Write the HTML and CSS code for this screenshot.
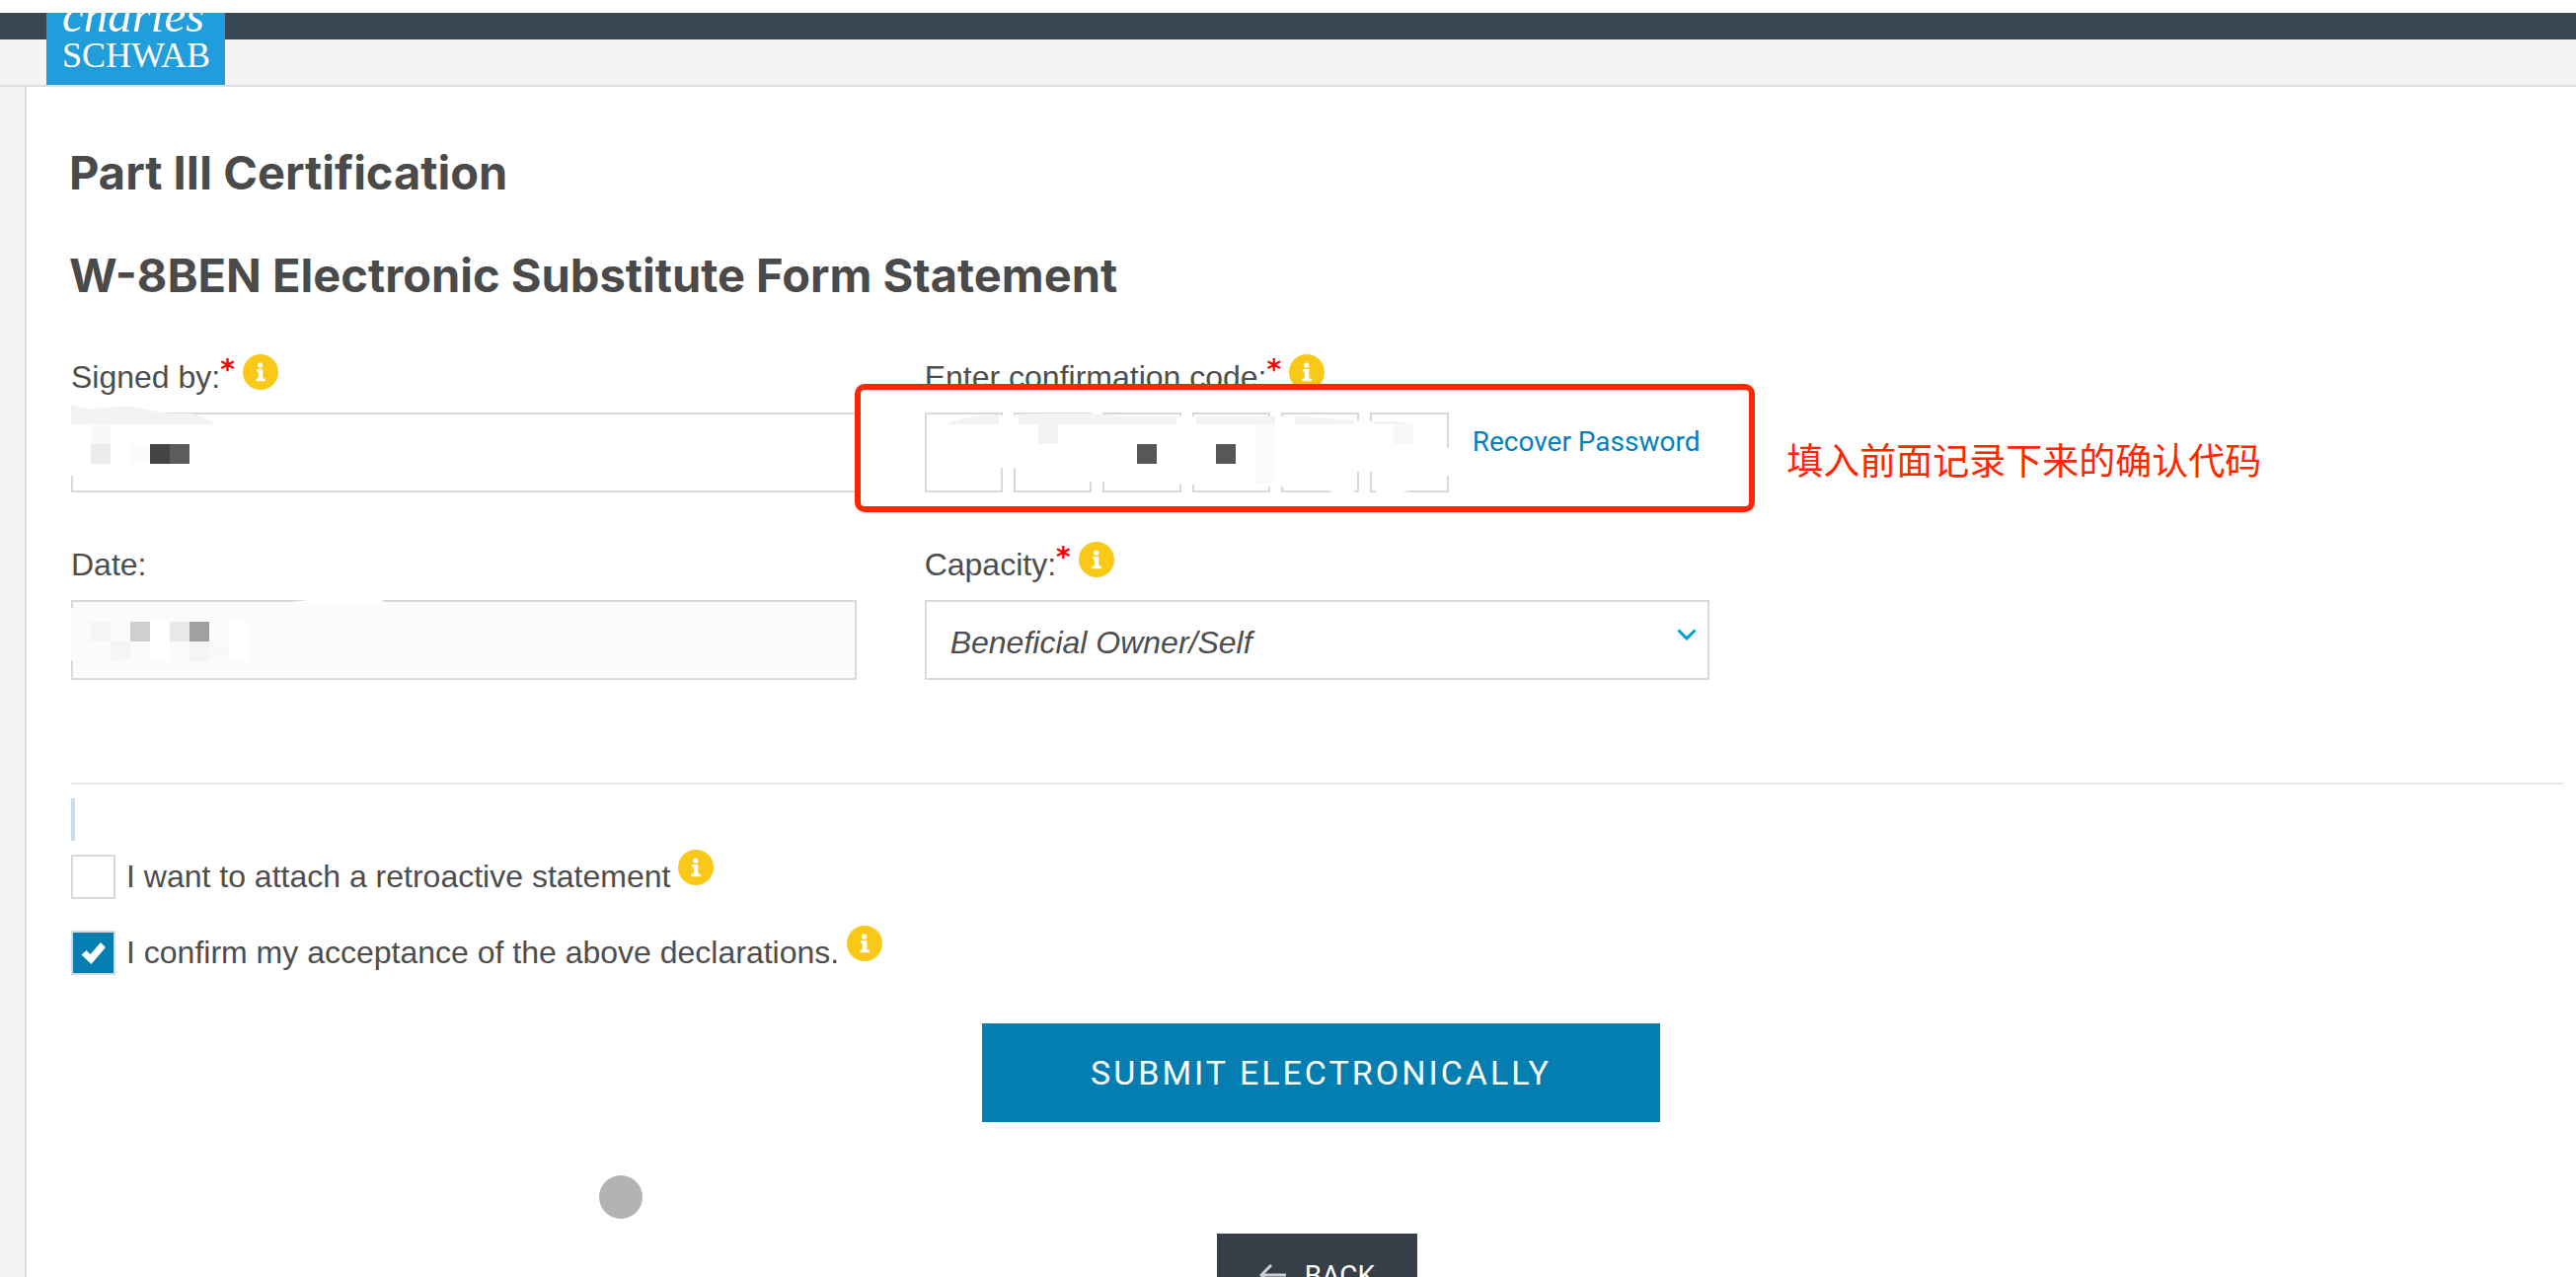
FILE: index.html
```html
<!DOCTYPE html>
<html lang="en">
<head>
<meta charset="utf-8">
<title>W-8BEN Certification</title>
<link rel="stylesheet" href="styles.css">
</head>
<body>
<svg class="defs" aria-hidden="true">
  <symbol id="info" viewBox="0 0 36 36">
    <circle cx="18" cy="18" r="18" fill="#fac917"/>
    <circle cx="17.7" cy="11.2" r="2.6" fill="#fff"/>
    <path d="M14 15h6.4v9.6h2.4v2.6h-9.4v-2.6h2.4v-7H14z" fill="#fff"/>
  </symbol>
</svg>

<header class="site-header">
  <div class="topbar"></div>
  <a class="logo" href="#" aria-label="Charles Schwab">
    <span class="logo-first">charles</span>
    <span class="logo-last">SCHWAB</span>
  </a>
</header>

<main class="panel">
  <h1 class="title">Part III Certification</h1>
  <h2 class="title">W-8BEN Electronic Substitute Form Statement</h2>

  <form class="form">
    <div class="fields">
      <div class="field">
        <div class="label-row">
          <label for="signed">Signed by:</label><span class="required">*</span>
          <button type="button" class="info" aria-label="About signed by"><svg><use href="#info"/></svg></button>
        </div>
        <div class="control">
          <input class="box" id="signed" type="text">
          <svg class="mosaic mosaic-signed" viewBox="0 0 160 80" aria-hidden="true">
            <path fill="#fff" d="M0 10H100V40H0zM0 20H4V72H0z"/>
            <path fill="#f3f3f3" d="M0 0C8 2 12 4 22 4C36 3 50 1 62 2C76 4 86 8 102 9L121 9C132 11 140 15 147 20H0z"/>
            <path fill="#f9f9f9" d="M20 20h20v20H20z"/>
            <path fill="#ebebeb" d="M20 40h20v20H20z"/>
            <path fill="#fbfbfb" d="M60 40h20v20H60z"/>
            <path fill="#444" d="M80 40h20v20H80z"/>
            <path fill="#5c5c5c" d="M100 40h20v20h-20z"/>
          </svg>
        </div>
      </div>

      <div class="field">
        <div class="label-row">
          <label for="code1">Enter confirmation code:</label><span class="required">*</span>
          <button type="button" class="info" aria-label="About the confirmation code"><svg><use href="#info"/></svg></button>
        </div>
        <div class="control code-row">
          <div class="codes">
            <input class="box" id="code1" type="text" maxlength="1">
            <input class="box" type="text" maxlength="1" aria-label="Code character 2">
            <input class="box" type="text" maxlength="1" aria-label="Code character 3">
            <input class="box" type="text" maxlength="1" aria-label="Code character 4">
            <input class="box" type="text" maxlength="1" aria-label="Code character 5">
            <input class="box" type="text" maxlength="1" aria-label="Code character 6">
          </div>
          <a class="recover" href="#">Recover Password</a>
          <svg class="mosaic mosaic-code" viewBox="0 0 540 90" aria-hidden="true">
            <path fill="#fff" d="M75 3h20v53H75zM165 3h19v67h-19zM255 4h20v69h-20zM346 4h19v71h-19zM435 9h22v74h-22zM408 79Q420 83 430 83H470Q482 82 492 79V60H408zM528 37l4-2v30l-4-2z"/>
            <path fill="#f3f3f3" d="M20 12C36 5 55 3 75 2V12zM95 2Q105 1 118 1H167Q186 2 202 4H255V12H95zM275 4H355V12H275zM375 4Q405 5 435 8V12H375zM455 9H477Q488 10 495 12H455z"/>
            <path fill="#f2f2f2" d="M115 12h20v20h-20z"/>
            <path fill="#f8f8f8" d="M475 12h20v20h-20z"/>
            <path fill="#fafafa" d="M335 12h20v60h-20z"/>
            <path fill="#575757" d="M215 32h20v20h-20zM295 32h20v20h-20z"/>
          </svg>
          <div class="callout"></div>
          <p class="note" lang="zh-CN">填入前面记录下来的确认代码</p>
        </div>
      </div>

      <div class="field field-date">
        <div class="label-row"><label for="date">Date:</label></div>
        <div class="control">
          <input class="box box-readonly" id="date" type="text" readonly>
          <svg class="mosaic mosaic-date" viewBox="0 0 320 81" aria-hidden="true">
            <path fill="#fbfbfb" d="M0 8h4v53H0z"/>
            <path fill="#fff" d="M224 2L240 0H315L317 2z"/>
            <path fill="#fff" d="M80 22h20v40H80zM160 22h20v40h-20z"/>
            <path fill="#f5f5f5" d="M20 22h20v20H20zM40 42h20v18l-20 2zM120 42h20v20h-20z"/>
            <path fill="#f9f9f9" d="M140 42h20v20h-20z"/>
            <path fill="#cfcfcf" d="M60 22h20v20H60z"/>
            <path fill="#e9e9e9" d="M100 22h20v20h-20z"/>
            <path fill="#a0a0a0" d="M120 22h20v20h-20z"/>
          </svg>
        </div>
      </div>

      <div class="field field-capacity">
        <div class="label-row">
          <label for="capacity">Capacity:</label><span class="required">*</span>
          <button type="button" class="info" aria-label="About capacity"><svg><use href="#info"/></svg></button>
        </div>
        <div class="control">
          <select class="box" id="capacity"><option>Beneficial Owner/Self</option></select>
          <svg class="chevron" viewBox="0 0 20 12" aria-hidden="true"><path d="M1.5 1.5L10 10l8.500-8.500" fill="none" stroke="#009ddc" stroke-width="3"/></svg>
        </div>
      </div>
    </div>

    <hr class="rule">
    <div class="marker"></div>

    <div class="checks">
      <div class="check">
        <input type="checkbox" id="retro">
        <label for="retro">I want to attach a retroactive statement</label>
        <button type="button" class="info" aria-label="About retroactive statements"><svg><use href="#info"/></svg></button>
      </div>
      <div class="check">
        <span class="tick">
          <input type="checkbox" id="confirm" checked>
          <svg viewBox="0 0 45 45" aria-hidden="true"><path d="M10.500 24.500l5-4.500 4 4L30 12l5 5L20.500 34z" fill="#fff"/></svg>
        </span>
        <label for="confirm">I confirm my acceptance of the above declarations.</label>
        <button type="button" class="info" aria-label="About the declarations"><svg><use href="#info"/></svg></button>
      </div>
    </div>

    <div class="actions">
      <button type="submit" class="submit">SUBMIT ELECTRONICALLY</button>
      <button type="button" class="back">
        <svg viewBox="0 0 28 22" aria-hidden="true"><path d="M12 1L2 11l10 10M2 11h25" fill="none" stroke="#ccd0d3" stroke-width="3"/></svg>
        BACK
      </button>
    </div>
  </form>
  <div class="pointer"></div>
</main>
</body>
</html>
```
FILE: styles.css
```css
* {
  box-sizing: border-box;
}

body {
  margin: 0;
  padding-top: 13px;
  background: #fff;
  color: #4d4d4d;
  font-family: "Liberation Sans", Arial, sans-serif;
  font-size: 32px;
}

button {
  border: 0;
  padding: 0;
  font-family: inherit;
  cursor: pointer;
}

.defs {
  display: none;
}

/* Header */
.site-header {
  position: relative;
  height: 73px;
  background: #f4f4f4;
}

.topbar {
  height: 27px;
  background: #374753;
}

.logo {
  position: absolute;
  top: 0;
  left: 47px;
  width: 181px;
  height: 73px;
  padding-left: 16px;
  overflow: hidden;
  background: #229ddc;
  color: #fff;
  font-family: "Liberation Serif", "Times New Roman", serif;
  line-height: 40px;
  text-decoration: none;
}

.logo span {
  display: block;
}

.logo-first {
  margin-top: -17px;
  font-size: 49px;
  font-style: italic;
}

.logo-last {
  font-size: 36px;
}

/* Page body */
.panel {
  position: relative;
  padding: 57px 13px 24px 70px;
  border-top: 2px solid #dcdcdc;
  background: linear-gradient(to right, #f4f4f4 25px, #dcdcdc 25px 27px, #fff 27px);
}

.title {
  margin: 0 0 44px;
  color: #4a4a4a;
  font-family: Inter, Arial, sans-serif;
  font-size: 47px;
  font-weight: 700;
  line-height: 60px;
}

.form {
  margin: 50px 0 0 2px;
}

.fields {
  display: grid;
  grid-template-columns: repeat(3, 1fr);
  gap: 50px 69px;
}

.field-date {
  grid-column: 1;
}

.field-capacity {
  grid-column: 2;
}

.label-row {
  display: flex;
  align-items: flex-start;
  height: 46px;
  margin-bottom: 13px;
  line-height: 46px;
}

.required {
  color: #f00;
  font-family: "DejaVu Sans", sans-serif;
  font-size: 28px;
  font-weight: 700;
  line-height: 32px;
}

.info {
  width: 36px;
  height: 36px;
  margin-left: 8px;
  background: none;
}

.info svg {
  display: block;
  width: 36px;
  height: 36px;
}

.control {
  position: relative;
}

.box {
  display: block;
  width: 100%;
  height: 81px;
  padding: 4px 24px 0;
  border: 2px solid #d9d9d9;
  border-radius: 0;
  background: #fff;
  color: inherit;
  font: inherit;
}

.box-readonly {
  background: #fbfbfb;
}

select.box {
  appearance: none;
  font-style: italic;
}

.chevron {
  position: absolute;
  top: 29px;
  right: 13px;
  width: 20px;
  height: 12px;
  pointer-events: none;
}

.code-row {
  display: flex;
  gap: 24px;
}

.codes {
  display: grid;
  flex: none;
  grid-template-columns: repeat(6, 1fr);
  gap: 11px;
  width: 531px;
}

.recover {
  color: #0481bd;
  font-family: Roboto, Arial, sans-serif;
  font-size: 28px;
  line-height: 60px;
  text-decoration: none;
  white-space: nowrap;
}

/* Redaction blocks over the entered values */
.mosaic {
  position: absolute;
  top: 0;
  left: 0;
  pointer-events: none;
}

.mosaic-signed {
  top: -8px;
  width: 160px;
  height: 80px;
}

.mosaic-code {
  width: 540px;
  height: 90px;
}

.mosaic-date {
  width: 320px;
  height: 81px;
}

/* Tutorial annotation */
.callout {
  position: absolute;
  top: -29px;
  right: -46px;
  bottom: -20px;
  left: -71px;
  border: 6px solid #ff2600;
  border-radius: 10px;
  pointer-events: none;
}

.note {
  position: absolute;
  top: 27px;
  left: calc(100% + 78px);
  margin: 0;
  color: #ff2600;
  font-family: "Noto Sans CJK SC", sans-serif;
  font-size: 37px;
  line-height: 40px;
  white-space: nowrap;
}

/* Declarations */
.rule {
  height: 2px;
  margin: 104px 0 14px;
  border: 0;
  background: #e9e9e9;
}

.marker {
  width: 4px;
  height: 43px;
  margin-bottom: 14px;
  background: #c9dced;
}

.checks {
  display: grid;
  gap: 32px;
}

.check {
  display: flex;
  align-items: flex-start;
  line-height: 45px;
}

.check label {
  padding-left: 11px;
}

.check .info {
  margin-top: -5px;
}

.check input {
  display: block;
  flex: none;
  width: 45px;
  height: 45px;
  margin: 0;
  border: 2px solid #d9d9d9;
  background: #fff;
  appearance: none;
}

.check input:checked {
  background: #047eb0;
}

.tick {
  position: relative;
}

.tick svg {
  position: absolute;
  inset: 0;
  pointer-events: none;
}

/* Buttons */
.actions {
  display: flex;
  flex-direction: column;
  align-items: center;
  gap: 113px;
  margin-top: 49px;
}

.submit {
  min-width: 687px;
  height: 100px;
  margin-left: 8px;
  background: #047eb0;
  color: #fff;
  font-family: Roboto, Arial, sans-serif;
  font-size: 34px;
  letter-spacing: 3px;
}

.back {
  display: flex;
  align-items: center;
  justify-content: center;
  gap: 18px;
  min-width: 203px;
  height: 84px;
  background: #363f48;
  color: #fff;
  font-family: Roboto, Arial, sans-serif;
  font-size: 28px;
}

.back svg {
  width: 28px;
  height: 22px;
}

.pointer {
  position: absolute;
  top: 1103px;
  left: 607px;
  width: 44px;
  height: 44px;
  border-radius: 50%;
  background: #b3b3b3;
}
```
